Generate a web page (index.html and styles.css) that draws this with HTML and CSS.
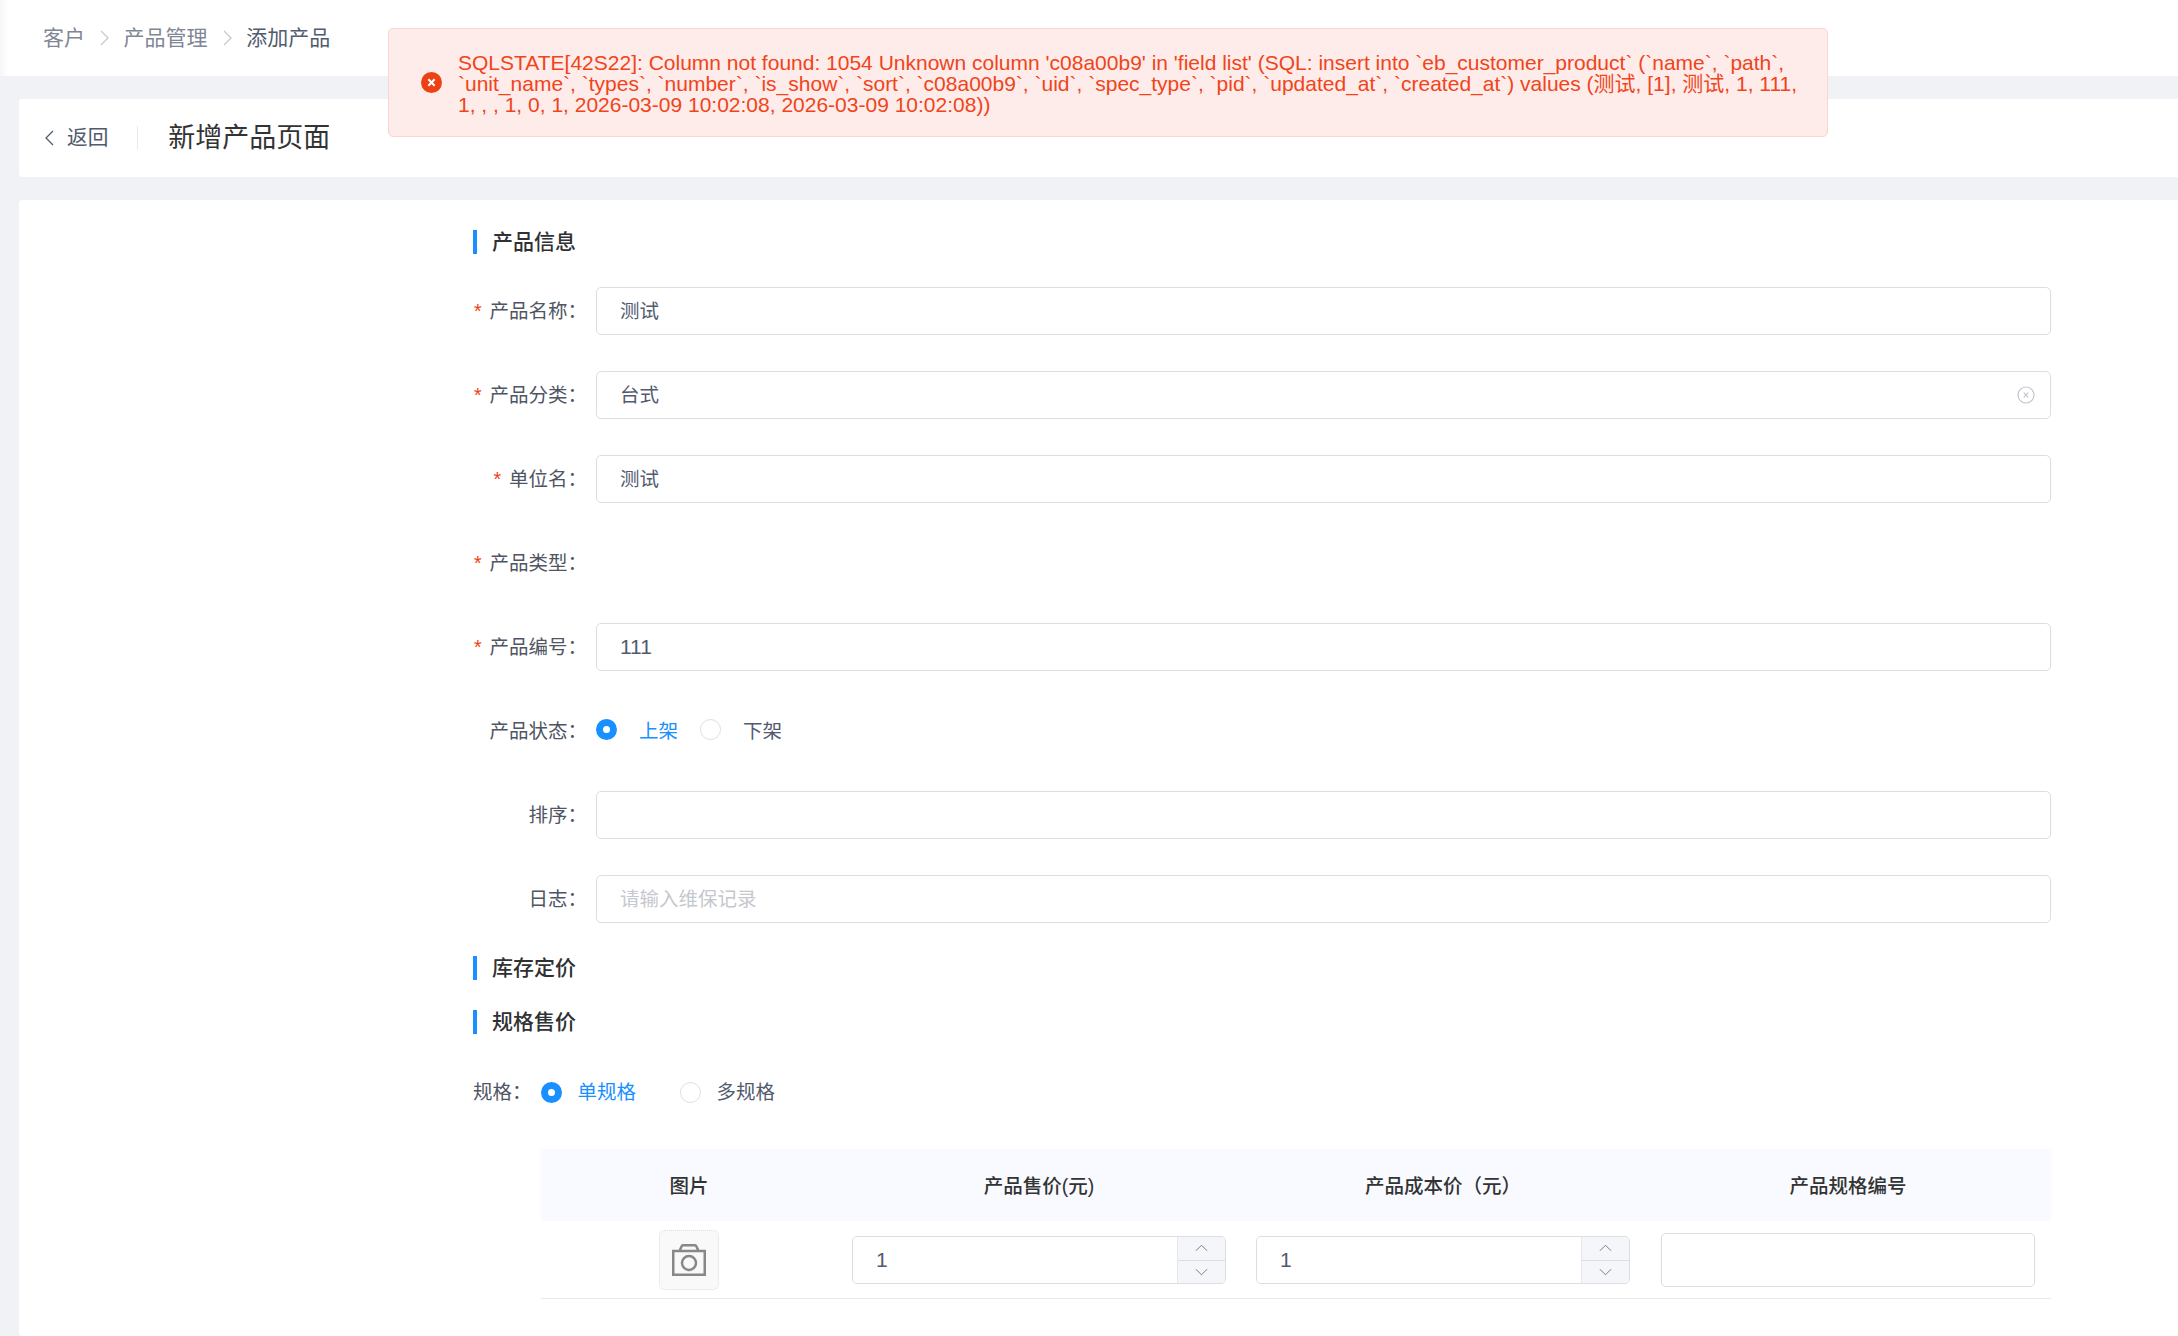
FILE: index.html
```html
<!DOCTYPE html>
<html lang="zh-CN">
<head>
<meta charset="utf-8">
<title>新增产品页面</title>
<link rel="stylesheet" href="styles.css">
</head>
<body>
<header class="topbar">
  <nav class="crumbs">
    <span class="crumb">客户</span>
    <svg class="crumb-sep" viewBox="0 0 9 16"><path d="M1 1l7 7-7 7"/></svg>
    <span class="crumb">产品管理</span>
    <svg class="crumb-sep" viewBox="0 0 9 16"><path d="M1 1l7 7-7 7"/></svg>
    <span class="crumb crumb-last">添加产品</span>
  </nav>
</header>
<div class="alert">
  <svg class="alert-icon" viewBox="0 0 20 20"><circle cx="10" cy="10" r="10"/><path d="M7 7l6 6M13 7l-6 6"/></svg>
  <p class="alert-text">SQLSTATE[42S22]: Column not found: 1054 Unknown column 'c08a00b9' in 'field list' (SQL: insert into `eb_customer_product` (`name`, `path`, `unit_name`, `types`, `number`, `is_show`, `sort`, `c08a00b9`, `uid`, `spec_type`, `pid`, `updated_at`, `created_at`) values (测试, [1], 测试, 1, 111, 1, , , 1, 0, 1, 2026-03-09 10:02:08, 2026-03-09 10:02:08))</p>
</div>
<main class="content">
  <section class="card page-head">
    <a class="back">
      <svg class="back-icon" viewBox="0 0 9 16"><path d="M8 1 1 8l7 7"/></svg>
      <span>返回</span>
    </a>
    <span class="head-divider"></span>
    <h1 class="page-title">新增产品页面</h1>
  </section>
  <section class="card form-card">
    <form class="form">
      <h2 class="section-title">产品信息</h2>
      <div class="row"><label class="label req">产品名称：</label><div class="input"><span>测试</span></div></div>
      <div class="row"><label class="label req">产品分类：</label><div class="input"><span>台式</span>
        <svg class="clear" viewBox="0 0 18 18"><circle cx="9" cy="9" r="8"/><path d="M6.7 6.7l4.6 4.6M11.3 6.7l-4.6 4.6"/></svg></div></div>
      <div class="row"><label class="label req">单位名：</label><div class="input"><span>测试</span></div></div>
      <div class="row"><label class="label req">产品类型：</label></div>
      <div class="row"><label class="label req">产品编号：</label><div class="input"><span class="digits">111</span></div></div>
      <div class="row"><label class="label">产品状态：</label>
        <div class="radios">
          <span class="radio on"></span><span class="radio-text on-text">上架</span>
          <span class="radio"></span><span class="radio-text">下架</span>
        </div>
      </div>
      <div class="row"><label class="label">排序：</label><div class="input"></div></div>
      <div class="row row-last"><label class="label">日志：</label><div class="input placeholder"><span>请输入维保记录</span></div></div>
      <h2 class="section-title section-second">库存定价</h2>
      <h2 class="section-title section-third">规格售价</h2>
      <div class="spec-row">
        <label class="spec-label">规格：</label>
        <span class="radio on"></span><span class="radio-text on-text">单规格</span>
        <span class="radio"></span><span class="radio-text">多规格</span>
      </div>
      <div class="table">
        <div class="th">图片</div>
        <div class="th">产品售价(元)</div>
        <div class="th">产品成本价（元）</div>
        <div class="th">产品规格编号</div>
        <div class="td">
          <div class="pic">
            <svg class="camera" viewBox="0 0 34 32"><path d="M1.25 7h31.5v23.75H1.25zM7.5 7l2-4.5q.5-1.25 1.5-1.25h12q1 0 1.5 1.25l2 4.5"/><circle cx="17" cy="19" r="7"/></svg>
          </div>
        </div>
        <div class="td">
          <div class="number"><span class="number-val digits">1</span>
            <div class="spin">
              <span class="spin-btn"><svg viewBox="0 0 14 8"><path d="M1 7l6-6 6 6"/></svg></span>
              <span class="spin-btn"><svg viewBox="0 0 14 8"><path d="M1 1l6 6 6-6"/></svg></span>
            </div>
          </div>
        </div>
        <div class="td">
          <div class="number"><span class="number-val digits">1</span>
            <div class="spin">
              <span class="spin-btn"><svg viewBox="0 0 14 8"><path d="M1 7l6-6 6 6"/></svg></span>
              <span class="spin-btn"><svg viewBox="0 0 14 8"><path d="M1 1l6 6 6-6"/></svg></span>
            </div>
          </div>
        </div>
        <div class="td td-last"><div class="code-input"></div></div>
      </div>
    </form>
  </section>
</main>
</body>
</html>
```
FILE: styles.css
```css
* { box-sizing: border-box; }
html, body { margin: 0; height: 100%; }
body {
  height: 1336px;
  overflow: hidden;
  background: #f0f2f5;
  color: #515a6e;
  font-family: "Liberation Sans", "Noto Sans CJK SC", sans-serif;
  font-size: 19.5px;
  line-height: 24px;
}
.topbar {
  height: 76px;
  background: linear-gradient(to right, #f6f6f6, #fff 8px);
  padding-left: 43px;
  display: flex;
  align-items: center;
}
.crumbs { display: flex; align-items: center; }
.crumb { color: #808695; font-size: 21px; }
.crumb-last { color: #515a6e; }
.crumb-sep { width: 9px; height: 16px; margin: 0 14.6px 0 15px; fill: none; stroke: #c5c8ce; stroke-width: 1.3; }

.alert {
  position: absolute;
  left: 388px;
  top: 28px;
  width: 1440px;
  height: 109px;
  display: flex;
  align-items: center;
  padding: 0 28px 0 32px;
  background: #feecea;
  border: 1px solid #fbd5cf;
  border-radius: 5px;
}
.alert-icon { flex: none; width: 21px; height: 21px; margin-right: 16px; }
.alert-icon circle { fill: #ed4014; }
.alert-icon path { stroke: #fff; stroke-width: 2; fill: none; }
.alert-text { margin: 2px 0 0; color: #f0441a; font-size: 21px; line-height: 21px; }

.content { padding: 23px 0 0 19px; }
.card { background: #fff; border-radius: 3px 0 0 3px; }
.page-head {
  height: 78px;
  display: flex;
  align-items: center;
  padding-left: 26px;
  margin-bottom: 23px;
}
.back { display: flex; align-items: center; color: #515a6e; font-size: 20.67px; }
.back-icon { width: 9px; height: 16px; margin-right: 13px; fill: none; stroke: #515a6e; stroke-width: 1.3; }
.head-divider { width: 1px; height: 24px; background: #e8eaec; margin: 0 30px 0 29px; }
.page-title { margin: 0; font-size: 27px; line-height: 32px; font-weight: 400; color: #333; }

.form-card { height: 1136px; padding: 30px 0 0 454px; }
.form { width: 1578px; }
.section-title {
  margin: 0 0 33px;
  height: 24px;
  line-height: 24px;
  border-left: 4px solid #1890ff;
  padding-left: 15px;
  font-size: 21px;
  font-weight: 500;
  color: #303133;
}
.section-second { margin-bottom: 30px; }
.section-third { margin-bottom: 34px; }
.row { display: flex; align-items: center; height: 48px; margin-bottom: 36px; }
.row-last { margin-bottom: 33px; }
.label { flex: none; width: 123px; padding-right: 9px; text-align: right; color: #4f5563; white-space: nowrap; }
.req::before { content: "*"; color: #ed4014; margin-right: 8px; }
.input {
  flex: 1;
  height: 48px;
  display: flex;
  align-items: center;
  justify-content: space-between;
  padding: 0 15px 0 23px;
  border: 1px solid #dcdee2;
  border-radius: 5px;
  background: #fff;
  color: #515a6e;
}
.digits { font-size: 21px; }
.placeholder { color: #c5c8ce; }
.clear { width: 18px; height: 18px; fill: none; stroke: #c0c4cc; stroke-width: 1.2; }
.radios { display: flex; align-items: center; }
.radio {
  flex: none;
  display: block;
  width: 21px;
  height: 21px;
  border: 1px solid #dcdee2;
  border-radius: 50%;
  background: #fff;
}
.radio.on { border: 7px solid #1890ff; }
.radios .radio { margin-bottom: 3px; }
.radio-text { margin: 0 22px; }
.on-text { color: #1890ff; }
.spec-row { display: flex; align-items: center; height: 48px; margin-bottom: 33px; }
.spec-label { width: 68px; color: #4f5563; white-space: nowrap; }
.spec-row .radio-text { margin: 0 44px 0 15.5px; }
.table {
  margin-left: 68px;
  display: grid;
  grid-template-columns: 296px 404px 404px 406px;
  width: 1510px;
}
.th {
  height: 72px;
  padding-top: 2px;
  background: #f8faff;
  display: flex;
  align-items: center;
  justify-content: center;
  color: #333;
  font-weight: 500;
}
.td {
  height: 78px;
  border-bottom: 1px solid #e8eaec;
  display: flex;
  align-items: center;
  justify-content: center;
  padding: 1px 15px 0;
}
.td-last { padding: 1px 16px 0; }
.pic {
  width: 60px;
  height: 60px;
  display: flex;
  align-items: center;
  justify-content: center;
  background: #f9f9f9;
  border: 1px dotted #dcdee2;
  border-radius: 6px;
}
.camera { width: 34px; height: 32px; fill: none; stroke: #888; stroke-width: 2.5; }
.number {
  width: 100%;
  height: 48px;
  display: flex;
  align-items: center;
  justify-content: space-between;
  border: 1px solid #dcdee2;
  border-radius: 5px;
  overflow: hidden;
}
.number-val { padding-left: 23px; color: #515a6e; }
.spin { width: 48px; height: 100%; border-left: 1px solid #e4e7ed; background: #f5f6fa; display: flex; flex-direction: column; }
.spin-btn { flex: 1; display: flex; align-items: center; justify-content: center; }
.spin-btn + .spin-btn { border-top: 1px solid #dcdee2; }
.spin-btn svg { width: 13px; height: 8px; fill: none; stroke: #707585; stroke-width: 1; }
.code-input { width: 100%; height: 54px; border: 1px solid #dcdee2; border-radius: 5px; background: #fff; }
```
